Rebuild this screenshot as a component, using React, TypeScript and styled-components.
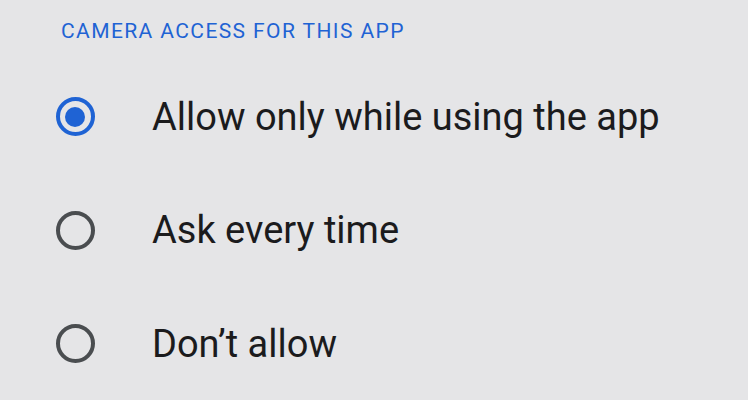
import React, { useState } from "react";
import styled, { createGlobalStyle } from "styled-components";

const Global = createGlobalStyle`
  html, body { margin: 0; padding: 0; background: #e5e5e7; }
  body { font-family: Roboto, "Noto Sans", sans-serif; }
`;

const Page = styled.div`
  width: 748px;
  height: 400px;
  background: #e5e5e7;
  overflow: hidden;
  display: flex;
  flex-direction: column;
`;

const Header = styled.div`
  padding: 19px 0 0 61px;
  height: 25px;
  font-size: 21px;
  line-height: 25px;
  letter-spacing: 1.4px;
  color: #1f63d4;
  font-weight: 400;
`;

const List = styled.div`
  display: flex;
  flex-direction: column;
  padding-top: 16px;
`;

const Row = styled.label`
  display: flex;
  align-items: center;
  height: 113.5px;
  cursor: pointer;
`;

const RadioWrap = styled.span`
  width: 40px;
  height: 40px;
  margin-left: 55px;
  margin-right: 57px;
  display: flex;
  align-items: center;
  justify-content: center;
`;

const Ring = styled.span<{ $on: boolean }>`
  box-sizing: border-box;
  width: 39px;
  height: 39px;
  border-radius: 50%;
  border: 4.5px solid ${(p) => (p.$on ? "#1f63d4" : "#4a4d50")};
  display: flex;
  align-items: center;
  justify-content: center;
`;

const Dot = styled.span`
  width: 20px;
  height: 20px;
  border-radius: 50%;
  background: #1f63d4;
`;

const Label = styled.span`
  font-size: 38px;
  color: #1b1b1d;
  letter-spacing: 0;
`;

const options = ["Allow only while using the app", "Ask every time", "Don’t allow"];

export default function App() {
  const [sel, setSel] = useState(0);
  return (
    <Page>
      <Global />
      <Header>CAMERA ACCESS FOR THIS APP</Header>
      <List>
        {options.map((o, i) => (
          <Row key={o} onClick={() => setSel(i)}>
            <RadioWrap>
              <Ring $on={sel === i}>{sel === i && <Dot />}</Ring>
            </RadioWrap>
            <Label>{o}</Label>
          </Row>
        ))}
      </List>
    </Page>
  );
}
